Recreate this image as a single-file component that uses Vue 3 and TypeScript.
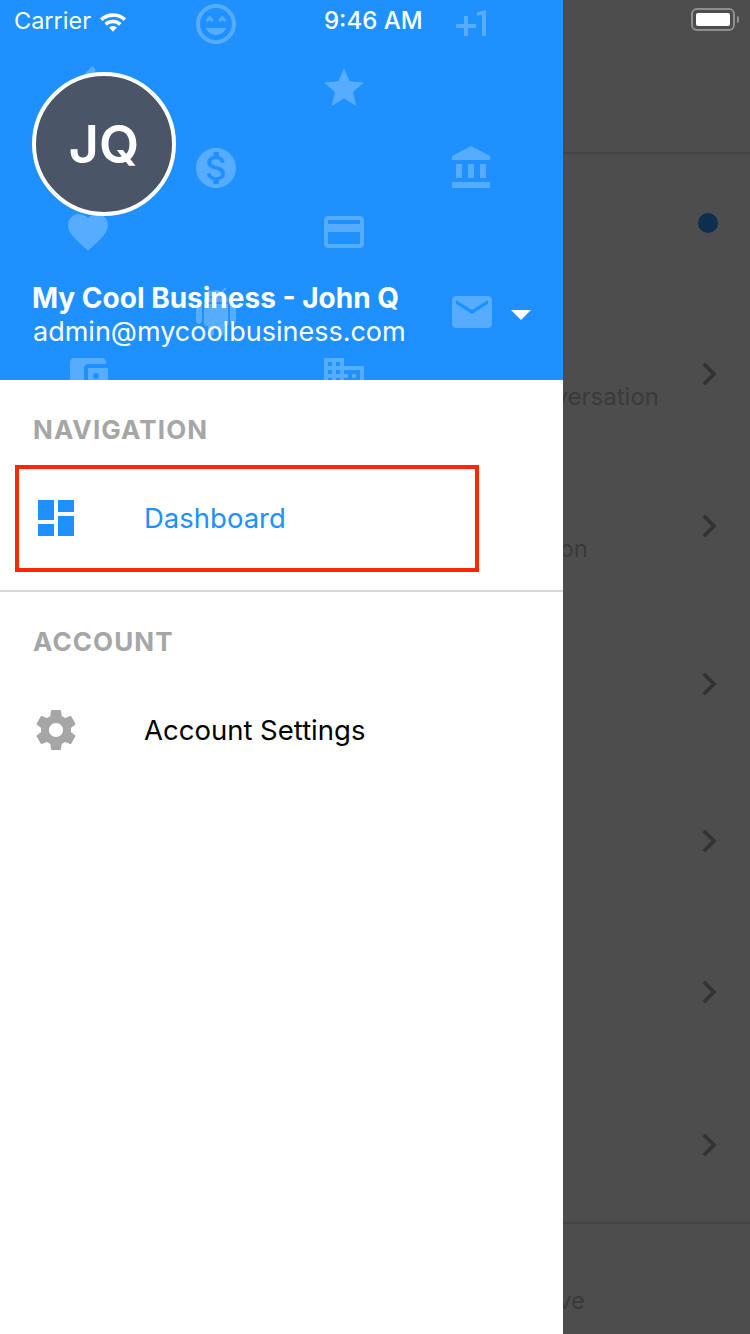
<script setup lang="ts">
const patternIcons = [
  { x: 192, y: 0, d: 'M11.99 2C6.47 2 2 6.47 2 12s4.47 10 9.99 10S22 17.53 22 12 17.52 2 11.99 2zM12 20c-4.42 0-8-3.58-8-8s3.58-8 8-8 8 3.58 8 8-3.58 8-8 8zm1-10.06L14.06 11l1.06-1.06L16.18 11l1.06-1.06-2.12-2.12zm-4.12 0L9.94 11 11 9.94 8.88 7.82 6.76 9.94 7.82 11zM12 17.5c2.33 0 4.31-1.46 5.11-3.5H6.89c.8 2.04 2.78 3.5 5.11 3.5z' },
  { x: 448, y: 0, d: 'M10 8H8v4H4v2h4v4h2v-4h4v-2h-4zm4.5-1.92V7.9l2.5-.5V18h2V5z' },
  { x: 64, y: 64, d: 'M1 21h4V9H1v12zm22-11c0-1.1-.9-2-2-2h-6.31l.95-4.57.03-.32c0-.41-.17-.79-.44-1.06L14.17 1 7.59 7.59C7.22 7.95 7 8.45 7 9v10c0 1.1.9 2 2 2h9c.83 0 1.54-.5 1.84-1.22l3.02-7.05c.09-.23.14-.47.14-.73v-2z' },
  { x: 320, y: 64, d: 'M12 17.27L18.18 21l-1.64-7.03L22 9.24l-7.19-.61L12 2 9.19 8.63 2 9.24l5.46 4.73L5.82 21z' },
  { x: 192, y: 144, d: 'M12 2C6.48 2 2 6.48 2 12s4.48 10 10 10 10-4.48 10-10S17.52 2 12 2zm1.41 16.09V20h-2.67v-1.93c-1.71-.36-3.16-1.46-3.27-3.4h1.96c.1 1.05.82 1.87 2.65 1.87 1.96 0 2.4-.98 2.4-1.59 0-.83-.44-1.61-2.67-2.14-2.48-.6-4.18-1.62-4.18-3.67 0-1.72 1.39-2.84 3.11-3.21V4h2.67v1.95c1.86.45 2.79 1.86 2.85 3.39H14.3c-.05-1.11-.64-1.87-2.22-1.87-1.5 0-2.4.68-2.4 1.64 0 .84.65 1.39 2.67 1.91s4.18 1.39 4.18 3.91c-.01 1.83-1.38 2.83-3.12 3.16z' },
  { x: 448, y: 144, d: 'M4 10v7h3v-7H4zm6 0v7h3v-7h-3zM2 22h19v-3H2v3zm14-12v7h3v-7h-3zm-4.5-9L2 6v2h19V6l-9.5-5z' },
  { x: 64, y: 208, d: 'M12 21.35l-1.45-1.32C5.4 15.36 2 12.28 2 8.5 2 5.42 4.42 3 7.5 3c1.74 0 3.41.81 4.5 2.09C13.09 3.81 14.76 3 16.5 3 19.58 3 22 5.42 22 8.5c0 3.78-3.4 6.86-8.55 11.54L12 21.35z' },
  { x: 320, y: 208, d: 'M20 4H4c-1.11 0-1.99.89-1.99 2L2 18c0 1.11.89 2 2 2h16c1.11 0 2-.89 2-2V6c0-1.11-.89-2-2-2zm0 14H4v-6h16v6zm0-10H4V6h16v2z' },
  { x: 192, y: 288, d: 'M6 18c0 .55.45 1 1 1h1v3.5c0 .83.67 1.5 1.5 1.5s1.5-.67 1.5-1.5V19h2v3.5c0 .83.67 1.5 1.5 1.5s1.5-.67 1.5-1.5V19h1c.55 0 1-.45 1-1V8H6v10zM3.5 8C2.67 8 2 8.67 2 9.5v7c0 .83.67 1.5 1.5 1.5S5 17.33 5 16.5v-7C5 8.67 4.33 8 3.5 8zm17 0c-.83 0-1.5.67-1.5 1.5v7c0 .83.67 1.5 1.5 1.5s1.5-.67 1.5-1.5v-7c0-.83-.67-1.5-1.5-1.5zm-4.97-5.84l1.3-1.3c.2-.2.2-.51 0-.71-.2-.2-.51-.2-.71 0l-1.48 1.48C13.85 1.23 12.95 1 12 1c-.96 0-1.86.23-2.66.63L7.85.15c-.2-.2-.51-.2-.71 0-.2.2-.2.51 0 .71l1.31 1.31C6.97 3.26 6 5.01 6 7h12c0-1.99-.97-3.75-2.47-4.84zM10 5H9V4h1v1zm5 0h-1V4h1v1z' },
  { x: 448, y: 288, d: 'M20 4H4c-1.1 0-1.99.9-1.99 2L2 18c0 1.1.9 2 2 2h16c1.1 0 2-.9 2-2V6c0-1.1-.9-2-2-2zm0 4l-8 5-8-5V6l8 5 8-5v2z' },
  { x: 64, y: 352, d: 'M21 18v1c0 1.1-.9 2-2 2H5c-1.11 0-2-.9-2-2V5c0-1.1.89-2 2-2h14c1.1 0 2 .9 2 2v1h-9c-1.11 0-2 .9-2 2v8c0 1.1.89 2 2 2h9zm-9-2h10V8H12v8zm4-2.5c-.83 0-1.5-.67-1.5-1.5s.67-1.5 1.5-1.5 1.5.67 1.5 1.5-.67 1.5-1.5 1.5z' },
  { x: 320, y: 352, d: 'M12 7V3H2v18h20V7H12zM6 19H4v-2h2v2zm0-4H4v-2h2v2zm0-4H4V9h2v2zm0-4H4V5h2v2zm4 12H8v-2h2v2zm0-4H8v-2h2v2zm0-4H8V9h2v2zm0-4H8V5h2v2zm10 12h-8v-2h2v-2h-2v-2h2v-2h-2V9h8v10zm-2-8h-2v2h2v-2zm0 4h-2v2h2v-2z' }
]

// rows of the screen behind the drawer, only their right ends show
const backdropRows = [
  { height: 137, label: '', gap: 0, chevron: false, dot: true },
  { height: 166, label: 'Start a conversation', gap: 27, chevron: true, dot: false },
  { height: 138, label: 'Notification', gap: 98, chevron: true, dot: false },
  { height: 178, label: '', gap: 0, chevron: true, dot: false },
  { height: 136, label: '', gap: 0, chevron: true, dot: false },
  { height: 166, label: '', gap: 0, chevron: true, dot: false },
  { height: 140, label: '', gap: 0, chevron: true, dot: false }
]
</script>

<template>
  <div class="screen">
    <aside class="drawer">
      <header class="profile">
        <svg
          v-for="(icon, index) in patternIcons"
          :key="index"
          class="pattern-icon"
          viewBox="0 0 24 24"
          :style="{ left: `${icon.x}px`, top: `${icon.y}px` }"
        >
          <path :d="icon.d" fill="currentColor" />
        </svg>

        <div class="avatar">JQ</div>
        <div class="profile-row">
          <div class="profile-text">
            <div class="profile-name">My Cool Business - John Q</div>
            <div class="profile-email">admin@mycoolbusiness.com</div>
          </div>
          <span class="caret"></span>
        </div>
      </header>

      <nav class="nav">
        <section class="nav-section">
          <h3 class="nav-label">NAVIGATION</h3>
          <div class="nav-item active">
            <svg class="nav-icon" viewBox="0 0 24 24">
              <path d="M3 13h8V3H3v10zm0 8h8v-6H3v6zm10 0h8V11h-8v10zm0-18v6h8V3h-8z" fill="currentColor" />
            </svg>
            <span>Dashboard</span>
            <span class="highlight"></span>
          </div>
        </section>
        <section class="nav-section">
          <h3 class="nav-label">ACCOUNT</h3>
          <div class="nav-item">
            <svg class="nav-icon" viewBox="0 0 24 24">
              <path
                d="M19.43 12.98c.04-.32.07-.64.07-.98s-.03-.66-.07-.98l2.11-1.65c.19-.15.24-.42.12-.64l-2-3.46c-.12-.22-.39-.3-.61-.22l-2.49 1c-.52-.4-1.08-.73-1.69-.98l-.38-2.65C14.46 2.18 14.25 2 14 2h-4c-.25 0-.46.18-.49.42l-.38 2.65c-.61.25-1.17.59-1.69.98l-2.49-1c-.23-.09-.49 0-.61.22l-2 3.46c-.13.22-.07.49.12.64l2.11 1.65c-.04.32-.07.65-.07.98s.03.66.07.98l-2.11 1.65c-.19.15-.24.42-.12.64l2 3.46c.12.22.39.3.61.22l2.49-1c.52.4 1.08.73 1.69.98l.38 2.65c.03.24.24.42.49.42h4c.25 0 .46-.18.49-.42l.38-2.65c.61-.25 1.17-.59 1.69-.98l2.49 1c.23.09.49 0 .61-.22l2-3.46c.12-.22.07-.49-.12-.64l-2.11-1.65zM12 15.5c-1.93 0-3.5-1.57-3.5-3.5s1.57-3.5 3.5-3.5 3.5 1.57 3.5 3.5-1.57 3.5-3.5 3.5z"
                fill="currentColor"
              />
            </svg>
            <span>Account Settings</span>
          </div>
        </section>
      </nav>
    </aside>

    <div class="backdrop">
      <div class="backdrop-header"></div>
      <div
        v-for="(row, index) in backdropRows"
        :key="index"
        class="backdrop-row"
        :style="{ height: `${row.height}px` }"
      >
        <span v-if="row.label" class="backdrop-label" :style="{ marginRight: `${row.gap}px` }">{{ row.label }}</span>
        <span v-if="row.dot" class="backdrop-dot"></span>
        <svg v-if="row.chevron" class="backdrop-chevron" viewBox="0 0 24 24">
          <path d="M8.6 16.6L13.2 12 8.6 7.4 10 6l6 6-6 6z" fill="currentColor" />
        </svg>
      </div>
      <div class="backdrop-footer">
        <span class="backdrop-label">Archive</span>
      </div>
    </div>

    <div class="status-bar">
      <div class="status-left">
        <span>Carrier</span>
        <svg class="wifi" viewBox="0 0 32 24">
          <path d="M16 3.5c5.4 0 10.4 2 14.3 5.6l-2.7 2.9A16.8 16.8 0 0 0 16 7.5c-4.3 0-8.400 1.600-11.600 4.500L1.700 9.100A21 21 0 0 1 16 3.500z" fill="currentColor" />
          <path d="M16 10.600c3.500 0 6.800 1.300 9.300 3.600l-2.700 2.900A9.900 9.900 0 0 0 16 14.500c-2.400 0-4.800.9-6.600 2.600l-2.700-2.900a13.700 13.700 0 0 1 9.300-3.600z" fill="currentColor" />
          <path d="M16 17.500c1.700 0 3.200.6 4.300 1.700L16 23.800l-4.300-4.600c1.100-1.100 2.600-1.700 4.300-1.700z" fill="currentColor" />
        </svg>
      </div>
      <span class="status-time">9:46 AM</span>
      <div class="battery">
        <span class="battery-level"></span>
      </div>
      <span class="battery-cap"></span>
    </div>
  </div>
</template>

<style scoped>
.screen {
  position: relative;
  display: flex;
  width: 750px;
  height: 1334px;
  overflow: hidden;
  font-family: Inter, "Liberation Sans", sans-serif;
}

.drawer {
  width: 563px;
  flex-shrink: 0;
  background: #fff;
}

.profile {
  position: relative;
  height: 380px;
  box-sizing: border-box;
  padding: 72px 32px 0;
  overflow: hidden;
  background: #1e90ff;
  color: #fff;
}

.pattern-icon {
  position: absolute;
  width: 48px;
  height: 48px;
  color: rgba(255, 255, 255, 0.25);
}

.avatar {
  position: relative;
  width: 144px;
  height: 144px;
  box-sizing: border-box;
  display: flex;
  align-items: center;
  justify-content: center;
  border: 4px solid #fff;
  border-radius: 50%;
  background: #4a5568;
  font-size: 52px;
  font-weight: 600;
}

.profile-row {
  position: relative;
  display: flex;
  align-items: center;
  justify-content: space-between;
  margin-top: 65px;
}

.profile-name {
  font-size: 28px;
  line-height: 34px;
  font-weight: 700;
}

.profile-email {
  margin-left: 1px;
  font-size: 27px;
  line-height: 34px;
}

.caret {
  width: 0;
  height: 0;
  border-left: 10px solid transparent;
  border-right: 10px solid transparent;
  border-top: 10px solid #fff;
}

.nav-section + .nav-section {
  margin-top: 20px;
  border-top: 2px solid #d8d8d8;
}

.nav-label {
  margin: 0;
  padding: 35px 33px 21px;
  font-size: 26px;
  line-height: 30px;
  font-weight: 700;
  letter-spacing: 1.1px;
  color: #a6a6a6;
}

.nav-item {
  position: relative;
  display: flex;
  align-items: center;
  gap: 64px;
  height: 104px;
  padding-left: 32px;
  font-size: 27.5px;
  color: #000;
}

.nav-item.active {
  color: #1e90ff;
}

.nav-icon {
  width: 48px;
  height: 48px;
  color: #a6a6a6;
}

.nav-item.active .nav-icon {
  color: #1e90ff;
}

.highlight {
  position: absolute;
  left: 15px;
  top: -1px;
  width: 464px;
  height: 107px;
  box-sizing: border-box;
  border: 4px solid #ff2600;
}

.backdrop {
  flex: 1;
  min-width: 0;
  overflow: hidden;
  background: #4d4d4d;
}

.backdrop-header {
  height: 154px;
  box-sizing: border-box;
  border-bottom: 2px solid #434343;
}

.backdrop-row {
  display: flex;
  align-items: center;
  justify-content: flex-end;
  padding-right: 18px;
}

.backdrop-label {
  flex-shrink: 0;
  margin-top: 44px;
  white-space: nowrap;
  font-size: 24px;
  color: #3a3a3a;
}

.backdrop-dot {
  width: 20px;
  height: 20px;
  margin-right: 14px;
  border-radius: 50%;
  background: #0c2e4f;
}

.backdrop-chevron {
  flex-shrink: 0;
  width: 46px;
  height: 46px;
  color: #333;
}

.backdrop-footer {
  display: flex;
  align-items: center;
  justify-content: flex-end;
  height: 112px;
  box-sizing: border-box;
  margin-top: 7px;
  padding: 42px 165px 0 0;
  border-top: 2px solid #434343;
}

.backdrop-footer .backdrop-label {
  margin-top: 0;
}

.status-bar {
  position: absolute;
  left: 0;
  top: 0;
  width: 750px;
  height: 40px;
  color: #fff;
  font-size: 24px;
}

.status-left {
  position: absolute;
  left: 14px;
  top: 6px;
  display: flex;
  align-items: center;
  gap: 6px;
  font-size: 23.5px;
}

.wifi {
  width: 32px;
  height: 22px;
}

.status-time {
  position: absolute;
  left: 324px;
  top: 6px;
  font-weight: 500;
}

.battery {
  position: absolute;
  left: 691px;
  top: 8px;
  width: 44px;
  height: 23px;
  box-sizing: border-box;
  padding: 3px;
  border: 2px solid #8f8f8f;
  border-radius: 6px;
}

.battery-level {
  display: block;
  width: 100%;
  height: 100%;
  border-radius: 2px;
  background: #fff;
}

.battery-cap {
  position: absolute;
  left: 737px;
  top: 16px;
  width: 2px;
  height: 7px;
  border-radius: 0 2px 2px 0;
  background: #8f8f8f;
}
</style>

<style>
html,
body {
  margin: 0;
  background: #4d4d4d;
}
</style>
